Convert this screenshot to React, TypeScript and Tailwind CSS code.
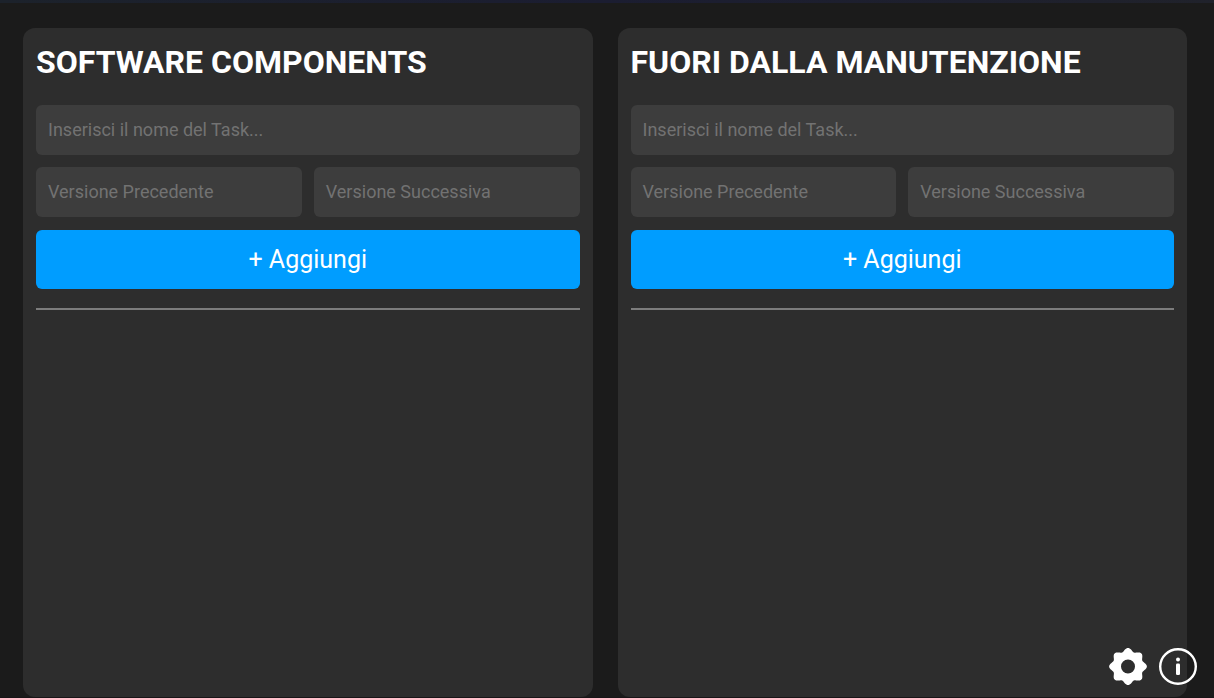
import { useId } from "react";

function Field({ label }: { label: string }) {
  const id = useId();
  return (
    <div className="grid min-w-0 items-center">
      <input
        id={id}
        type="text"
        placeholder=" "
        className="peer col-start-1 row-start-1 h-[50px] w-full min-w-0 rounded-md bg-[#3d3d3d] px-3 text-lg text-white outline-none"
      />
      <label
        htmlFor={id}
        className="pointer-events-none invisible col-start-1 row-start-1 px-3 text-lg text-[#727272] peer-placeholder-shown:visible"
      >
        {label}
      </label>
    </div>
  );
}

function TaskPanel({ title }: { title: string }) {
  return (
    <section className="flex min-w-0 flex-1 flex-col rounded-xl bg-[#2d2d2d] px-[13px] pt-3">
      <h2 className="text-[32px] leading-[44px] font-bold text-white">{title}</h2>
      <form className="mt-[21px] flex flex-col" onSubmit={(e) => e.preventDefault()}>
        <Field label="Inserisci il nome del Task..." />
        <div className="mt-3 grid grid-cols-2 gap-3">
          <Field label="Versione Precedente" />
          <Field label="Versione Successiva" />
        </div>
        <button
          type="submit"
          className="mt-[13px] h-[59px] rounded-md bg-[#009dff] text-[25px] text-white"
        >
          + Aggiungi
        </button>
      </form>
      <hr className="mt-[19px] border-t-2 border-[#7c7c7c]" />
    </section>
  );
}

// Eight rounded teeth: the radius swings between the valleys and the tips.
const gearOutline =
  Array.from({ length: 144 }, (_, i) => {
    const a = (i / 144) * Math.PI * 2;
    const r = 17.2 + 1.7 * Math.cos(8 * a);
    const x = 19 + r * Math.cos(a);
    const y = 18.5 + r * 0.98 * Math.sin(a);
    return `${i === 0 ? "M" : "L"}${x.toFixed(2)} ${y.toFixed(2)}`;
  }).join(" ") + " Z";

function GearIcon() {
  return (
    <svg viewBox="0 0 38 37" className="h-[37px] w-[38px]" fill="#fff" aria-hidden="true">
      <path
        fillRule="evenodd"
        d={`${gearOutline} M19 11.5 a7 7 0 1 0 0 14 a7 7 0 1 0 0 -14 Z`}
      />
    </svg>
  );
}

function InfoIcon() {
  return (
    <svg viewBox="0 0 38 37" className="h-[37px] w-[38px]" fill="none" aria-hidden="true">
      <ellipse cx="19" cy="18.5" rx="17.8" ry="17.3" stroke="#fff" strokeWidth="2.4" />
      <circle cx="19" cy="11.6" r="2" fill="#fff" />
      <rect x="17" y="15.6" width="4" height="11.4" rx="1.3" fill="#fff" />
    </svg>
  );
}

export default function App() {
  return (
    <div className="flex min-h-screen flex-col bg-[#1b1b1b] font-['Roboto',sans-serif]">
      <div className="h-[3px] bg-linear-to-r from-[#1c222b] via-[#1b1d31] to-[#20222b]" />
      <main className="flex flex-1 gap-[25px] pt-[25px] pr-[27px] pl-[23px]">
        <TaskPanel title="SOFTWARE COMPONENTS" />
        <TaskPanel title="FUORI DALLA MANUTENZIONE" />
      </main>
      <div className="h-px bg-[#181517]" />
      <div className="fixed right-[17px] bottom-[13px] flex gap-3">
        <button type="button" aria-label="Impostazioni">
          <GearIcon />
        </button>
        <button type="button" aria-label="Informazioni">
          <InfoIcon />
        </button>
      </div>
    </div>
  );
}
